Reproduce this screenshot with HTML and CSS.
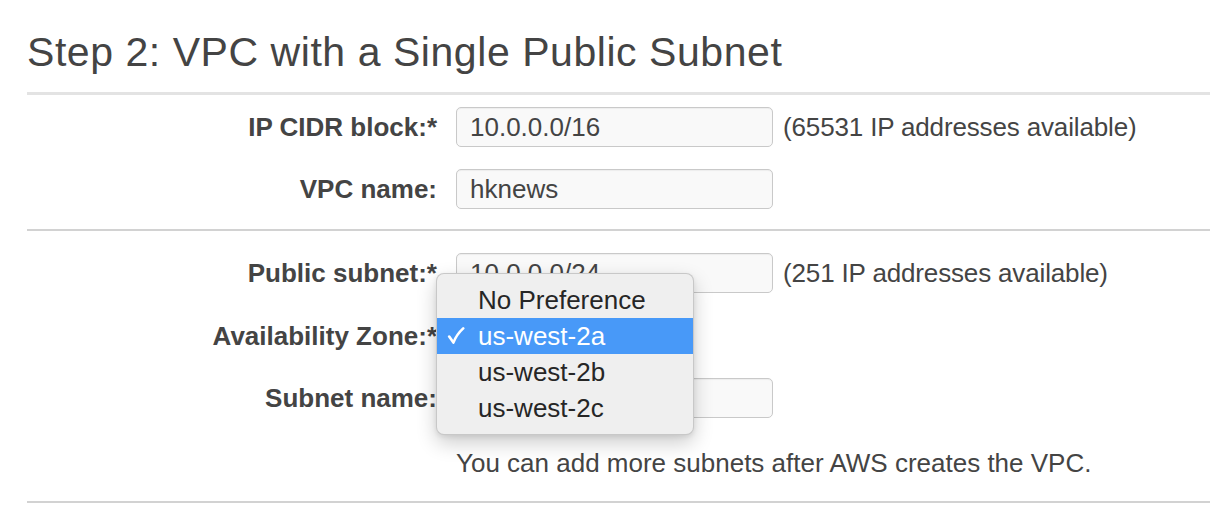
FILE: index.html
```html
<!DOCTYPE html>
<html lang="en">
<head>
<meta charset="utf-8">
<title>Step 2: VPC with a Single Public Subnet</title>
<link rel="stylesheet" href="styles.css">
</head>
<body>
<div class="wizard">
  <h1 class="title">Step 2: VPC with a Single Public Subnet</h1>

  <div class="group group-vpc">
    <div class="form-grid">
      <label class="label">IP CIDR block:*</label>
      <div class="field"><input class="text-input" type="text" value="10.0.0.0/16"></div>
      <div class="note">(65531 IP addresses available)</div>

      <label class="label">VPC name:</label>
      <div class="field"><input class="text-input" type="text" value="hknews"></div>
      <div class="note"></div>
    </div>
  </div>

  <div class="group group-subnet">
    <div class="form-grid">
      <label class="label">Public subnet:*</label>
      <div class="field"><input class="text-input" type="text" value="10.0.0.0/24"></div>
      <div class="note">(251 IP addresses available)</div>

      <label class="label">Availability Zone:*</label>
      <div class="field"><div class="select-placeholder"></div></div>
      <div class="note"></div>

      <label class="label">Subnet name:</label>
      <div class="field"><input class="text-input" type="text" value=""></div>
      <div class="note"></div>

      <div class="spacer"></div>
      <div class="help">You can add more subnets after AWS creates the VPC.</div>
    </div>

    <ul class="menu">
      <li class="menu-item">No Preference</li>
      <li class="menu-item selected"><svg class="check" width="18" height="18" viewBox="0 0 18 18" aria-hidden="true"><path d="M2.2 9.6 L6.4 15.6 C8.4 10.4 11.6 5.6 16.2 1.4" fill="none" stroke="#ffffff" stroke-width="2.6" stroke-linecap="round" stroke-linejoin="round"/></svg>us-west-2a</li>
      <li class="menu-item">us-west-2b</li>
      <li class="menu-item">us-west-2c</li>
    </ul>
  </div>
</div>
</body>
</html>
```

FILE: styles.css
```css
html, body {
  margin: 0;
  padding: 0;
  background: #ffffff;
}

body {
  font-family: "Liberation Sans", Arial, Helvetica, sans-serif;
  color: #444444;
  overflow: hidden;
}

.wizard {
  padding-left: 27px;
}

.title {
  margin: 0;
  padding-top: 28px;
  font-size: 41px;
  line-height: 48px;
  font-weight: 400;
  color: #444444;
  letter-spacing: 0.55px;
}

.group {
  position: relative;
}

.group-vpc {
  margin-top: 16px;
  border-top: 3px solid #e3e3e3;
  padding: 12px 0 20px;
}

.group-subnet {
  border-top: 2px solid #d2d2d2;
  border-bottom: 2px solid #d2d2d2;
  padding: 22px 0 16px;
}

.form-grid {
  display: grid;
  grid-template-columns: 410px 317px 1fr;
  column-gap: 19px;
  row-gap: 22px;
  align-items: center;
}

.group-subnet .form-grid {
  row-gap: 22.5px;
}

.label {
  font-size: 26px;
  font-weight: 700;
  text-align: right;
  color: #444444;
  line-height: 40px;
  white-space: nowrap;
}

.field {
  height: 40px;
}

.text-input {
  box-sizing: border-box;
  width: 317px;
  height: 40px;
  margin: 0;
  padding: 0 13px;
  border: 1px solid #c9c9c9;
  border-radius: 5px;
  background: #f9f9f9;
  box-shadow: inset 0 1px 1px rgba(0, 0, 0, 0.05);
  font-family: "Liberation Sans", Arial, Helvetica, sans-serif;
  font-size: 26px;
  color: #444444;
  outline: none;
}

.select-placeholder {
  height: 40px;
}

.note {
  font-size: 26px;
  line-height: 40px;
  margin-left: -9px;
  color: #444444;
  white-space: nowrap;
  letter-spacing: -0.15px;
}

.spacer {
  height: 44px;
}

.help {
  grid-column: 2 / 4;
  font-size: 26px;
  line-height: 44px;
  color: #444444;
  white-space: nowrap;
}

.menu {
  position: absolute;
  top: 42px;
  left: 409px;
  width: 258px;
  box-sizing: border-box;
  margin: 0;
  padding: 8px 0;
  list-style: none;
  background: #efefef;
  border: 1px solid rgba(0, 0, 0, 0.16);
  border-radius: 8px;
  box-shadow: 0 8px 20px rgba(0, 0, 0, 0.2), 0 2px 5px rgba(0, 0, 0, 0.08);
}

.menu-item {
  position: relative;
  height: 36px;
  line-height: 36px;
  padding-left: 41px;
  font-family: "Liberation Sans", Arial, Helvetica, sans-serif;
  font-size: 26px;
  color: #262626;
  white-space: nowrap;
}

.menu-item.selected {
  background: #4899f8;
  color: #ffffff;
}

.check {
  position: absolute;
  left: 10px;
  top: 9px;
}
```
